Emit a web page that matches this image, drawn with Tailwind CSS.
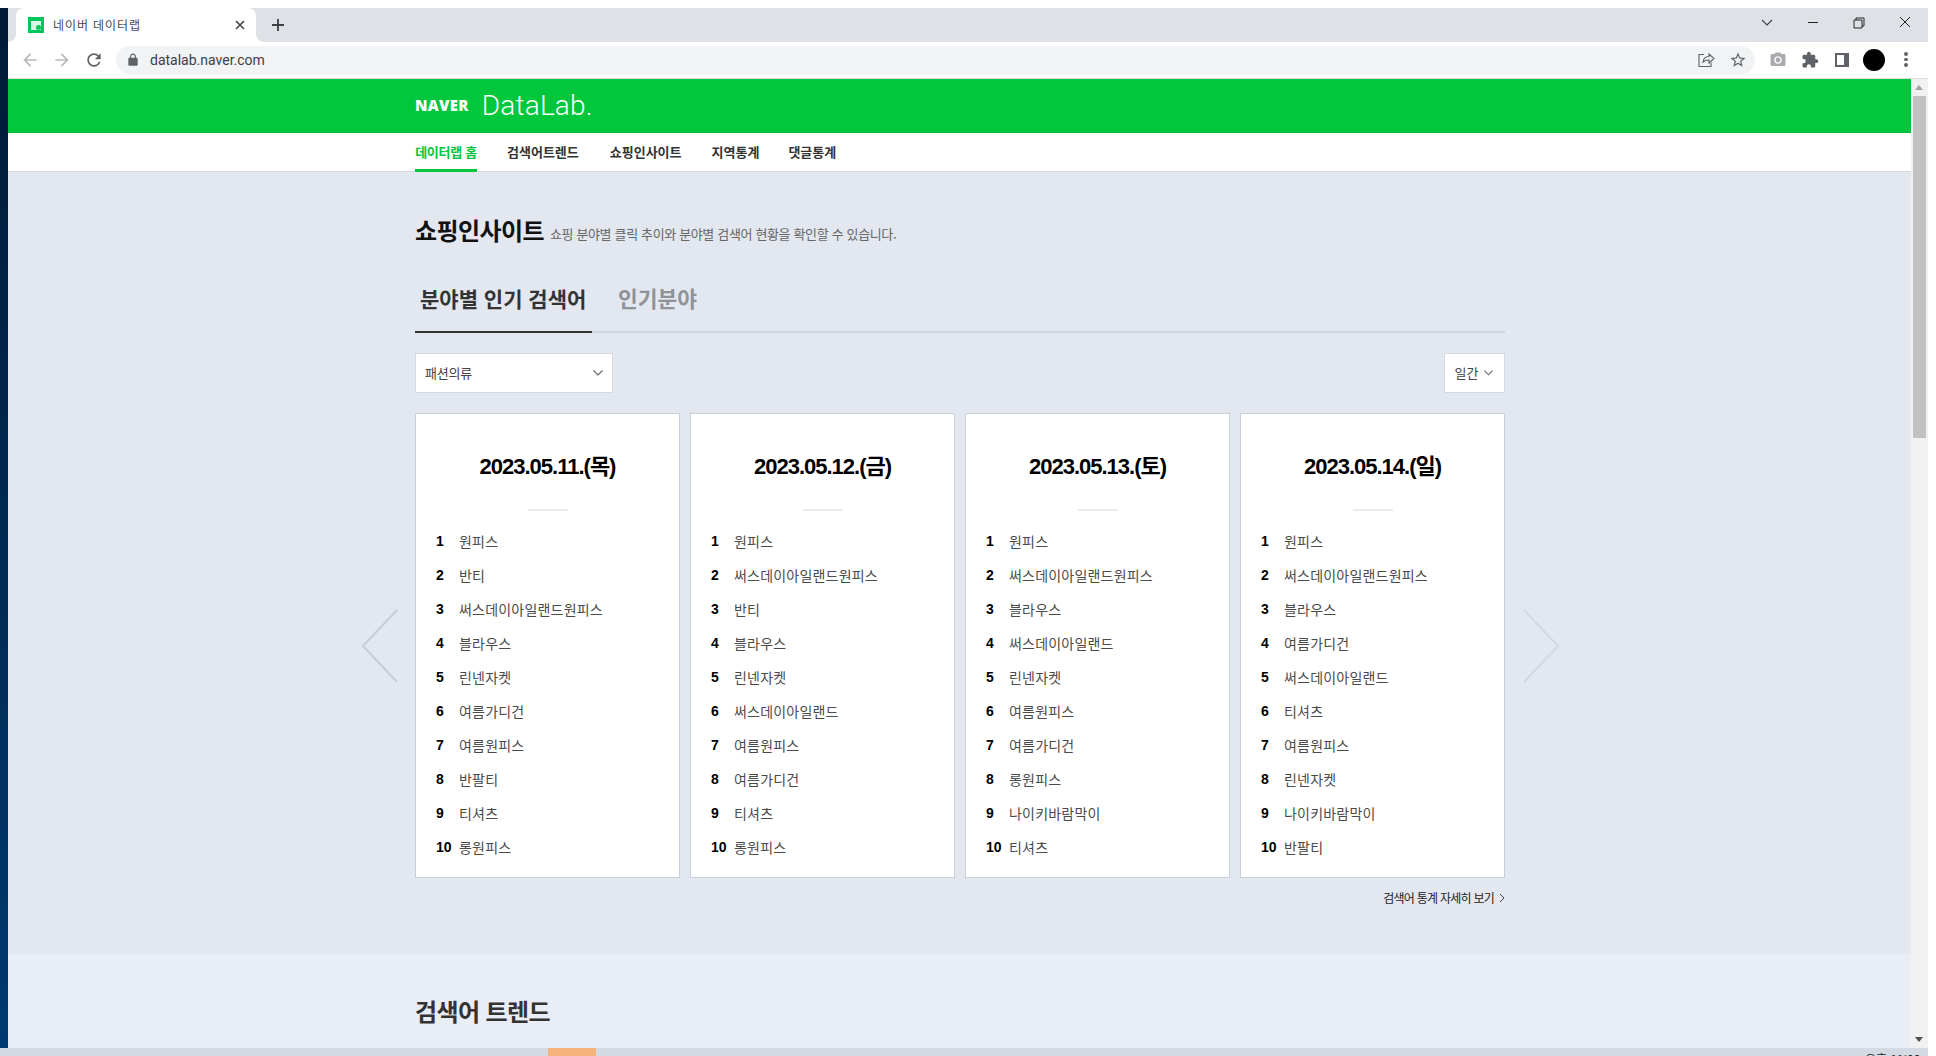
<!DOCTYPE html>
<html lang="ko">
<head>
    <meta charset="UTF-8">
    <title>네이버 데이터랩</title>
    <script src="https://cdn.jsdelivr.net/npm/@tailwindcss/browser@4"></script>
</head>
<body class="bg-white">
<div class="w-[1936px] h-[1056px] overflow-hidden bg-white flex flex-col font-['Noto_Sans_CJK_KR',sans-serif]">
    <div class="h-[8px] shrink-0"></div>
    <div class="flex h-[1040px] shrink-0">
        <!-- desktop edge -->
        <div class="w-[8px] shrink-0 bg-gradient-to-b from-[#001a35] to-[#003a70]"></div>

        <div class="w-[1920px] shrink-0 flex flex-col">
            <!-- tab strip -->
            <div class="h-[34px] shrink-0 bg-[#dee1e6] flex items-end relative">
                <div class="relative ml-[8px] w-[240px] h-[34px] bg-white rounded-t-[8px] flex items-center pl-[12px]">
                    <div class="w-[16px] h-[16px] bg-[#03c75a] flex items-center justify-center">
                        <div class="w-[10px] h-[9px] bg-white/85 flex items-end justify-end"><div class="w-[5px] h-[5px] bg-[#03c75a] rounded-full"></div></div>
                    </div>
                    <span class="ml-[9px] text-[12px] tracking-[0.9px] text-[#45494e] leading-none">네이버 데이터랩</span>
                    <svg class="absolute left-[218px] top-[11px]" width="12" height="12" viewBox="0 0 12 12"><path d="M2 2l8 8M10 2l-8 8" stroke="#45494e" stroke-width="1.7" fill="none"/></svg>
                    <div class="absolute right-[-8px] bottom-0 w-[8px] h-[8px] bg-white"><div class="w-[8px] h-[8px] bg-[#dee1e6] rounded-bl-[8px]"></div></div>
                    <div class="absolute left-[-8px] bottom-0 w-[8px] h-[8px] bg-white"><div class="w-[8px] h-[8px] bg-[#dee1e6] rounded-br-[8px]"></div></div>
                </div>
                <svg class="absolute left-[263px] top-[10px]" width="14" height="14" viewBox="0 0 14 14"><path d="M7 1v12M1 7h12" stroke="#3c4043" stroke-width="1.8" fill="none"/></svg>
                <!-- window controls -->
                <svg class="absolute left-[1752px] top-[10px]" width="14" height="10" viewBox="0 0 14 10"><path d="M2 2l5 5 5-5" stroke="#3c4043" stroke-width="1.1" fill="none"/></svg>
                <div class="absolute left-[1800px] top-[14px] w-[10px] h-[1px] bg-[#222]"></div>
                <svg class="absolute left-[1845px] top-[9px]" width="12" height="12" viewBox="0 0 12 12"><path d="M3 3V1h8v8H9M1 3h8v8H1z" stroke="#222" stroke-width="1" fill="none"/></svg>
                <svg class="absolute left-[1891px] top-[8px]" width="12" height="12" viewBox="0 0 12 12"><path d="M1 1l10 10M11 1L1 11" stroke="#222" stroke-width="1" fill="none"/></svg>
            </div>

            <!-- toolbar -->
            <div class="h-[37px] shrink-0 bg-white border-b border-[#d9dce0] flex items-center pl-[6px] pb-[1px]">
                <div class="w-[32px] flex justify-center"><svg width="20" height="20" viewBox="0 0 24 24" fill="#b7b9bc"><path d="M20 11H7.830l5.590-5.590L12 4l-8 8 8 8 1.410-1.410L7.830 13H20v-2z"/></svg></div>
                <div class="w-[32px] flex justify-center"><svg width="20" height="20" viewBox="0 0 24 24" fill="#b7b9bc"><path d="M4 11h12.170l-5.590-5.590L12 4l8 8-8 8-1.410-1.410L16.170 13H4v-2z"/></svg></div>
                <div class="w-[32px] flex justify-center"><svg width="20" height="20" viewBox="0 0 24 24" fill="#5f6368"><path d="M17.650 6.350C16.200 4.900 14.210 4 12 4c-4.420 0-7.990 3.580-7.990 8s3.570 8 7.990 8c3.730 0 6.840-2.550 7.730-6h-2.080c-.82 2.330-3.040 4-5.650 4-3.310 0-6-2.690-6-6s2.690-6 6-6c1.660 0 3.140.69 4.220 1.780L13 11h7V4l-2.350 2.350z"/></svg></div>
                <div class="ml-[6px] w-[1639px] h-[28px] rounded-full bg-[#f1f3f4] flex items-center pl-[10px] relative">
                    <svg width="14" height="14" viewBox="0 0 24 24" fill="#5f6368"><path d="M18 8h-1V6c0-2.760-2.240-5-5-5S7 3.240 7 6v2H6c-1.100 0-2 .9-2 2v10c0 1.100.9 2 2 2h12c1.100 0 2-.9 2-2V10c0-1.100-.9-2-2-2zM9 6c0-1.660 1.340-3 3-3s3 1.340 3 3v2H9V6z"/></svg>
                    <span class="ml-[10px] text-[14px] text-[#3c4043] font-['Roboto',sans-serif] relative top-[1px]">datalab.naver.com</span>
                    <svg class="absolute left-[1581px] top-[6px]" width="18" height="16" viewBox="0 0 18 16" fill="none" stroke="#5f6368" stroke-width="1.1"><path d="M7 2.500H2v12h12v-4"/><path d="M6 10c.5-3.500 3-5.500 6-5.500V2l5 4.500-5 4.500V8c-2.500 0-4.500.5-6 2z"/></svg>
                    <svg class="absolute left-[1613px] top-[5px]" width="18" height="18" viewBox="0 0 24 24" fill="#5f6368"><path d="M22 9.240l-7.190-.620L12 2 9.190 8.630 2 9.240l5.460 4.730L5.820 21 12 17.270 18.180 21l-1.630-7.030L22 9.240zM12 15.400l-3.760 2.270 1-4.280-3.320-2.880 4.380-.380L12 6.100l1.710 4.040 4.380.380-3.320 2.880 1 4.280L12 15.400z"/></svg>
                </div>
                <div class="ml-[7px] w-[32px] flex justify-center"><svg width="18" height="18" viewBox="0 0 24 24" fill="#a9abae"><path d="M12 15.200a3.200 3.200 0 1 0 0-6.400 3.200 3.200 0 0 0 0 6.400zM9 2 7.170 4H4c-1.100 0-2 .9-2 2v12c0 1.100.9 2 2 2h16c1.100 0 2-.9 2-2V6c0-1.100-.9-2-2-2h-3.170L15 2H9zm3 15c-2.760 0-5-2.240-5-5s2.240-5 5-5 5 2.240 5 5-2.240 5-5 5z"/></svg></div>
                <div class="w-[32px] flex justify-center"><svg width="18" height="18" viewBox="0 0 24 24" fill="#5f6368"><path d="M20.500 11H19V7c0-1.100-.9-2-2-2h-4V3.500C13 2.120 11.880 1 10.500 1S8 2.120 8 3.500V5H4c-1.100 0-1.990.9-1.990 2v3.800H3.500c1.490 0 2.700 1.210 2.700 2.700s-1.210 2.700-2.700 2.700H2V20c0 1.100.9 2 2 2h3.800v-1.500c0-1.490 1.210-2.700 2.700-2.700 1.490 0 2.700 1.210 2.700 2.700V22H17c1.100 0 2-.9 2-2v-4h1.500c1.380 0 2.500-1.120 2.500-2.500S21.880 11 20.500 11z"/></svg></div>
                <div class="w-[32px] flex justify-center"><div class="w-[14px] h-[14px] border-[2px] border-[#5f6368] border-r-[5px] bg-white"></div></div>
                <div class="w-[32px] flex justify-center"><div class="w-[22px] h-[22px] rounded-full bg-black"></div></div>
                <div class="w-[32px] flex flex-col items-center gap-[2px]">
                    <div class="w-[3.500px] h-[3.500px] rounded-full bg-[#5f6368]"></div>
                    <div class="w-[3.500px] h-[3.500px] rounded-full bg-[#5f6368]"></div>
                    <div class="w-[3.500px] h-[3.500px] rounded-full bg-[#5f6368]"></div>
                </div>
            </div>

            <!-- viewport -->
            <div class="h-[969px] shrink-0 flex">
                <div class="w-[1903px] shrink-0 overflow-hidden flex flex-col bg-[#e9edf5]">
                    <div class="h-[54px] shrink-0 bg-[#00c73c] border-b border-[#02b838] flex items-center pl-[407px]">
                        <span class="text-[15px] font-black tracking-[0.3px] text-white font-['Open_Sans',sans-serif] leading-none">NAVER</span>
                        <span class="ml-[13px] text-[28px] font-light tracking-[0.2px] text-white font-['Roboto',sans-serif] leading-none">DataLab.</span>
                    </div>
                    <nav class="h-[39px] shrink-0 bg-white border-b border-[#d5dae2] flex pl-[407px] text-[13px] font-bold text-[#333]">
                        <a class="h-[39px] -mb-[1px] w-[62px] text-center leading-[37px] text-[#00c73c] border-b-[3px] border-[#00c73c] whitespace-nowrap tracking-[-0.3px]">데이터랩 홈</a>
                        <a class="ml-[30px] leading-[37px]">검색어트렌드</a>
                        <a class="ml-[31px] leading-[37px]">쇼핑인사이트</a>
                        <a class="ml-[30px] leading-[37px]">지역통계</a>
                        <a class="ml-[29px] leading-[37px]">댓글통계</a>
                    </nav>

                    <section class="h-[782px] shrink-0 bg-[#e3e7ef] pt-[43px] pl-[407px]">
                        <div class="w-[1090px] relative">
                            <div class="flex items-end h-[30px]">
                                <h2 class="text-[24px] font-bold text-[#111] leading-[30px] tracking-[-0.6px]">쇼핑인사이트</h2>
                                <p class="ml-[6px] text-[13px] text-[#666] leading-[22px] tracking-[-0.35px]">쇼핑 분야별 클릭 추이와 분야별 검색어 현황을 확인할 수 있습니다.</p>
                            </div>
                            <div class="mt-[37px] flex border-b-2 border-[#d0d5de] h-[51px]">
                                <div class="w-[177px] h-[51px] border-b-2 border-[#333] pl-[5px] text-[21px] font-bold text-[#333] leading-[32px] whitespace-nowrap">분야별 인기 검색어</div>
                                <div class="ml-[26px] text-[21.500px] font-bold text-[#8f9296] leading-[32px]">인기분야</div>
                            </div>
                            <div class="mt-[20px] flex justify-between">
                                <div class="w-[198px] h-[40px] bg-white border border-[#d5dae0] flex items-center justify-between pl-[9px] pr-[8px] text-[13px] text-[#444] tracking-[-0.2px]">
                                    <span>패션의류</span>
                                    <svg width="12" height="8" viewBox="0 0 12 8"><path d="M1.500 1.500L6 6l4.500-4.500" stroke="#666" stroke-width="1.200" fill="none"/></svg>
                                </div>
                                <div class="w-[61px] h-[40px] bg-white border border-[#d5dae0] flex items-center justify-center gap-[5px] text-[13px] text-[#444]">
                                    <span>일간</span>
                                    <svg width="11" height="8" viewBox="0 0 12 8"><path d="M1.500 1.500L6 6l4.500-4.500" stroke="#666" stroke-width="1.200" fill="none"/></svg>
                                </div>
                            </div>
                            <!-- carousel arrows -->
                            <svg class="absolute left-[-54px] top-[394px]" width="38" height="74" viewBox="0 0 38 74"><path d="M36 1L2 37l34 36" stroke="#c5ced8" stroke-width="2" fill="none"/></svg>
                            <svg class="absolute left-[1107px] top-[394px]" width="38" height="74" viewBox="0 0 38 74"><path d="M2 1l34 36L2 73" stroke="#d3dae3" stroke-width="2" fill="none"/></svg>

                            <div id="cards" class="mt-[20px] grid grid-cols-4 gap-[10px]"></div>

                            <div class="mt-[12px] flex justify-end items-center h-[16px] text-[12px] text-[#222] tracking-[-0.75px]">
                                <span>검색어 통계 자세히 보기</span>
                                <svg class="ml-[5px]" width="6" height="10" viewBox="0 0 6 10"><path d="M1 1l4 4-4 4" stroke="#444" stroke-width="1" fill="none"/></svg>
                            </div>
                        </div>
                    </section>

                    <section class="pt-[41px] pl-[407px]">
                        <h2 class="text-[24px] font-bold text-[#333] leading-[32px] tracking-[-0.6px]">검색어 트렌드</h2>
                    </section>
                </div>

                <!-- scrollbar -->
                <div class="w-[17px] shrink-0 bg-[#f1f1f1] relative">
                    <div class="absolute left-[4px] top-[6px] w-0 h-0 border-x-[4.500px] border-x-transparent border-b-[5px] border-b-[#a3a3a3]"></div>
                    <div class="absolute left-[2px] top-[17px] w-[13px] h-[342px] bg-[#c1c1c1]"></div>
                    <div class="absolute left-[4px] bottom-[6px] w-0 h-0 border-x-[4.500px] border-x-transparent border-t-[5px] border-t-[#505050]"></div>
                </div>
            </div>
        </div>
    </div>

    <!-- taskbar, cut off at the bottom -->
    <div class="h-[8px] shrink-0 flex">
        <div class="w-[1928px] bg-[#d3dae3] relative overflow-hidden">
            <div class="absolute left-[548px] top-0 w-[48px] h-[8px] bg-[#f5b27a]"></div>
            <span class="absolute left-[1865px] top-[3px] text-[12px] leading-[16px] text-[#222] whitespace-nowrap">오후 11:00</span>
        </div>
    </div>
</div>

<script>
    const days = [
        { date: "2023.05.11.(목)", items: ["원피스", "반티", "써스데이아일랜드원피스", "블라우스", "린넨자켓", "여름가디건", "여름원피스", "반팔티", "티셔츠", "롱원피스"] },
        { date: "2023.05.12.(금)", items: ["원피스", "써스데이아일랜드원피스", "반티", "블라우스", "린넨자켓", "써스데이아일랜드", "여름원피스", "여름가디건", "티셔츠", "롱원피스"] },
        { date: "2023.05.13.(토)", items: ["원피스", "써스데이아일랜드원피스", "블라우스", "써스데이아일랜드", "린넨자켓", "여름원피스", "여름가디건", "롱원피스", "나이키바람막이", "티셔츠"] },
        { date: "2023.05.14.(일)", items: ["원피스", "써스데이아일랜드원피스", "블라우스", "여름가디건", "써스데이아일랜드", "티셔츠", "여름원피스", "린넨자켓", "나이키바람막이", "반팔티"] },
    ];

    document.getElementById("cards").innerHTML = days.map((day) => `
        <div class="h-[465px] bg-white border border-[#c8cfd9]">
            <div class="pt-[39px] h-[95px] text-center text-[22px] font-bold text-black leading-[28px] tracking-[-1px] font-['Liberation_Sans','Noto_Sans_CJK_KR',sans-serif]">${day.date}</div>
            <div class="w-[40px] h-[2px] bg-[#e9ecef] mx-auto"></div>
            <ol class="mt-[13px] pl-[20px]">
                ${day.items.map((item, i) => `
                    <li class="h-[34px] flex items-center">
                        <span class="w-[23px] text-[14px] font-bold text-black font-['Liberation_Sans',sans-serif]">${i + 1}</span>
                        <span class="text-[14px] tracking-[0.2px] text-[#4a4a4a]">${item}</span>
                    </li>`).join("")}
            </ol>
        </div>`).join("");
</script>
</body>
</html>
